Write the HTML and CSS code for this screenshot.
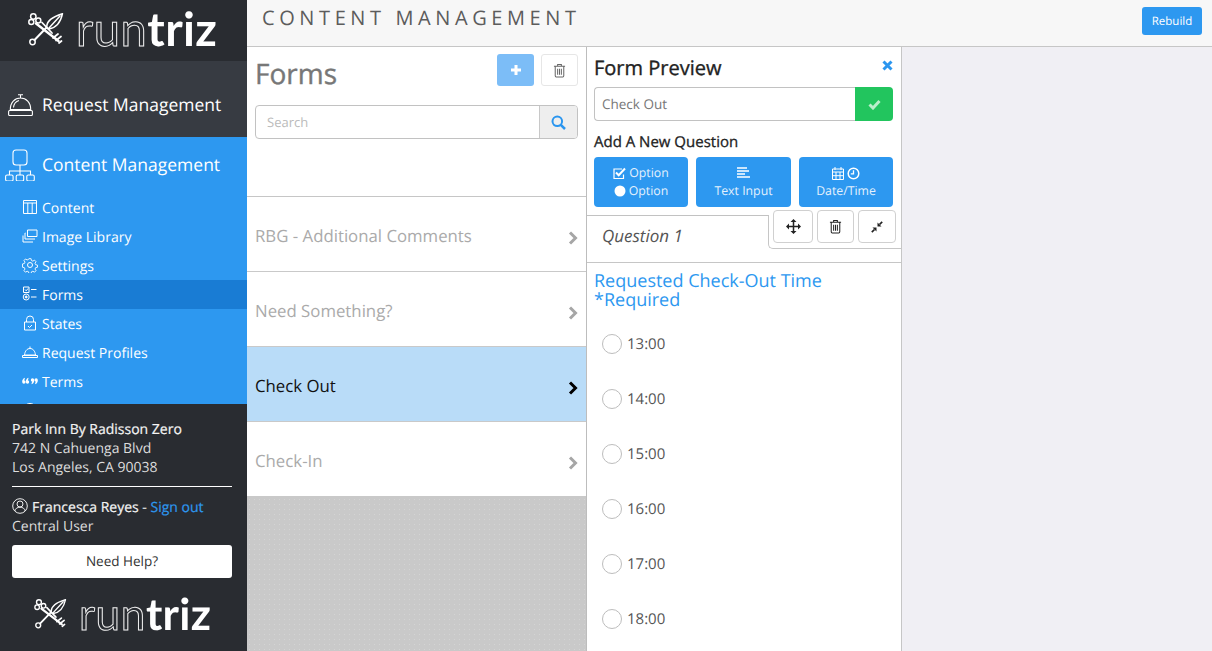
FILE: index.html
```html
<!DOCTYPE html>
<html lang="en">
<head>
<meta charset="utf-8">
<title>Content Management</title>
<link rel="stylesheet" href="styles.css">
</head>
<body>
<svg class="defs" width="0" height="0" aria-hidden="true">
  <symbol id="keys" viewBox="0 0 36 33">
    <g fill="none" stroke="#fff" stroke-width="1.500" stroke-linecap="round" stroke-linejoin="round">
      <circle cx="5.300" cy="3.500" r="2.700"/>
      <circle cx="3.300" cy="9" r="2.500"/>
      <circle cx="10.300" cy="7.500" r="2.500"/>
      <path d="M8 10.500 L30.500 28" stroke-width="2.400"/>
      <path d="M25 25 l5-4 M28 27.500 l5-4 M31 30 l2.500-2" stroke-width="1.800"/>
      <circle cx="4.500" cy="29" r="2.700"/>
      <path d="M6.500 27 L20 13" stroke-width="2"/>
      <path d="M19 15 C17.500 8 24 4 34.500 .7 C32.500 10 27.500 15 21 16 Z" fill="#292c31"/>
      <path d="M21 15 L32 3"/>
      <path d="M14 9.500 L24 20" stroke-width="1.800"/>
    </g>
  </symbol>
  <symbol id="trash" viewBox="0 0 14 16">
    <path fill="none" stroke="currentColor" stroke-width="1.100" d="M1 3.500h12M5 3.300V1.600h4v1.700M2.400 3.500v10.200c0 .7.400 1.200 1 1.200h7.200c.6 0 1-.5 1-1.200V3.500M5 6v6.500M7 6v6.500M9 6v6.500"/>
  </symbol>
  <symbol id="chev" viewBox="0 0 10 14">
    <path fill="none" stroke="currentColor" stroke-width="3" d="M2 1.500 L7.500 7 L2 12.500"/>
  </symbol>
</svg>

<div class="app">
  <aside class="sidebar">
    <div class="brand">
      <svg class="brand-keys"><use href="#keys"/></svg>
      <span class="wordmark"><span class="outline">run</span>triz</span>
    </div>
    <nav class="nav">
      <a class="section dark">
        <svg class="bell-icon" viewBox="0 0 25 22" fill="none" stroke="#fff" stroke-width="1.100">
          <path d="M12.500 .5v3.500M10 .8h5M2.300 15.500c0-7 4.500-11.500 10.200-11.500s10.200 4.500 10.200 11.500zM5.500 13.500c.3-3.500 2.300-6 5.500-7"/>
          <rect x=".6" y="16.500" width="23.800" height="5" rx="1"/>
        </svg>
        <span>Request Management</span>
      </a>
      <a class="section active">
        <svg class="section-icon" viewBox="0 0 30 32" fill="none" stroke="#fff" stroke-width="1.100">
          <rect x="8" y="1" width="14" height="15" rx="3"/>
          <path d="M15 16v6M4.500 26v-4h21v4M15 22v4"/>
          <rect x="0.600" y="26" width="7.500" height="6" rx="1.500"/>
          <rect x="11.200" y="26" width="7.500" height="6" rx="1.500"/>
          <rect x="21.800" y="26" width="7.500" height="6" rx="1.500"/>
        </svg>
        <span>Content Management</span>
      </a>
      <ul class="subnav">
        <li class="subitem">
          <svg class="sub-icon" viewBox="0 0 16 16" fill="none" stroke="#fff"><path d="M1.500 1.500h13v13h-13zM1.500 4h13M5.800 4v10.500M10.200 4v10.500"/></svg>
          Content
        </li>
        <li class="subitem">
          <svg class="sub-icon" viewBox="0 0 16 16" fill="none" stroke="#fff"><path d="M5.500 2h9.500v6.500H5.500zM3.500 5H3v6h10M1 7.500V14h10"/></svg>
          Image Library
        </li>
        <li class="subitem">
          <svg class="sub-icon" viewBox="0 0 16 16" fill="none" stroke="#fff"><circle cx="8" cy="8" r="2.500"/><path d="M6.800 1h2.400l.4 2 1.600.7 1.800-1.100 1.700 1.700-1.100 1.800.7 1.600 2 .4v2.400l-2 .4-.7 1.600 1.100 1.800-1.700 1.700-1.800-1.100-1.600.7-.4 2H6.800l-.4-2-1.600-.7-1.800 1.100-1.700-1.700 1.100-1.800-.7-1.600-2-.4V6.800l2-.4.7-1.600L1.300 3l1.700-1.700 1.800 1.100 1.600-.7z" transform="translate(.8 .8) scale(.9)"/></svg>
          Settings
        </li>
        <li class="subitem current">
          <svg class="sub-icon" viewBox="0 0 16 16" fill="none" stroke="#fff"><path d="M1.500 1h5.500v5.500H1.500zM3 3.500l1.200 1.300L6 2.500M9 3.500h5.500M9 11h5.500"/><circle cx="4.200" cy="11" r="3"/><circle cx="4.200" cy="11" r="1" fill="#fff"/></svg>
          Forms
        </li>
        <li class="subitem">
          <svg class="sub-icon" viewBox="0 0 16 16" fill="none" stroke="#fff"><path d="M2.500 7h11v8h-11zM4.500 7V4.500a3.500 3.500 0 0 1 7 0V7M6 11l1.500 1.500L10 10"/></svg>
          States
        </li>
        <li class="subitem">
          <svg class="sub-icon" viewBox="0 0 16 16" fill="none" stroke="#fff"><path d="M8 2.500v1.500M2.500 11C3 7 5 4.500 8 4.500s5 2.500 5.500 6.500zM.500 11.500h15v2H.5z"/></svg>
          Request Profiles
        </li>
        <li class="subitem">
          <svg class="sub-icon" viewBox="0 0 16 16" fill="#fff"><circle cx="1.900" cy="9" r="1.700"/><circle cx="5.500" cy="9" r="1.700"/><circle cx="10.500" cy="7" r="1.700"/><circle cx="14.100" cy="7" r="1.700"/><path d="M.2 8.800C.3 6.500 1.300 5.200 2.800 4.700v1.100L2 8zM3.800 8.800C3.900 6.500 4.900 5.200 6.400 4.700v1.100L5.600 8zM12.200 7.200c-.1 2.300-1.100 3.600-2.600 4.100v-1.100l.8-2.200zM15.800 7.200c-.1 2.300-1.100 3.600-2.600 4.100v-1.100l.8-2.200z"/></svg>
          Terms
        </li>
        <li class="subitem">
          <svg class="sub-icon" viewBox="0 0 16 16" fill="none" stroke="#fff"><circle cx="8" cy="8" r="6.500"/><path d="M1.500 8h13M8 1.500c-4 4-4 9 0 13M8 1.500c4 4 4 9 0 13"/></svg>
        </li>
      </ul>
    </nav>
    <div class="account">
      <div class="hotel">Park Inn By Radisson Zero</div>
      <div class="address">742 N Cahuenga Blvd</div>
      <div class="address">Los Angeles, CA 90038</div>
      <hr class="rule">
      <div class="user">
        <svg class="user-icon" viewBox="0 0 16 16" fill="none" stroke="#eee"><circle cx="8" cy="8" r="7.300"/><circle cx="8" cy="6" r="3"/><path d="M2.800 13c.5-2.600 2.600-3.800 5.200-3.800s4.700 1.200 5.200 3.800"/></svg>
        <span class="user-name">Francesca Reyes - </span><a class="signout">Sign out</a>
      </div>
      <div class="address">Central User</div>
      <button class="help">Need Help?</button>
      <div class="brand-foot">
        <svg class="foot-keys"><use href="#keys"/></svg>
        <span class="wordmark"><span class="outline">run</span>triz</span>
      </div>
    </div>
  </aside>

  <div class="main">
    <header class="topbar">
      <h1 class="page-title">CONTENT MANAGEMENT</h1>
      <button class="rebuild">Rebuild</button>
    </header>
    <div class="columns">
      <section class="forms">
        <div class="forms-head">
          <div class="forms-title-row">
            <h2 class="forms-title">Forms</h2>
            <button class="icon-btn add">
              <svg width="12" height="12" viewBox="0 0 12 12"><path d="M6 1v10M1 6h10" stroke="#fff" stroke-width="3"/></svg>
            </button>
            <button class="icon-btn ghost"><svg width="13" height="15"><use href="#trash"/></svg></button>
          </div>
          <div class="search">
            <span class="search-input">Search</span>
            <span class="search-btn">
              <svg width="15" height="15" viewBox="0 0 15 15" fill="none" stroke="#2b96ef" stroke-width="2"><circle cx="6.300" cy="6.300" r="4.800"/><path d="M9.800 9.800 L14 14" stroke-width="2.500"/></svg>
            </span>
          </div>
        </div>
        <ul class="form-list">
          <li class="form-row">RBG - Additional Comments<svg class="chev" width="10" height="14"><use href="#chev"/></svg></li>
          <li class="form-row">Need Something?<svg class="chev" width="10" height="14"><use href="#chev"/></svg></li>
          <li class="form-row selected">Check Out<svg class="chev" width="10" height="14"><use href="#chev"/></svg></li>
          <li class="form-row">Check-In<svg class="chev" width="10" height="14"><use href="#chev"/></svg></li>
        </ul>
      </section>

      <section class="preview">
        <div class="preview-head">
          <h2 class="preview-title">Form Preview</h2>
          <svg class="close" width="11" height="11" viewBox="0 0 11 11"><path d="M1.500 1.500l8 8M9.500 1.500l-8 8" stroke="#2b96ef" stroke-width="3"/></svg>
        </div>
        <div class="name-field">
          <span class="name-input">Check Out</span>
          <span class="name-ok">
            <svg width="13" height="11" viewBox="0 0 13 11" fill="none" stroke="#b9eecb" stroke-width="3"><path d="M1.500 5.500l3.500 3.500 6.500-7"/></svg>
          </span>
        </div>
        <h3 class="add-title">Add A New Question</h3>
        <div class="add-buttons">
          <button class="add-btn">
            <span class="add-line">
              <svg width="13" height="13" viewBox="0 0 13 13" fill="none" stroke="#fff" stroke-width="1.200"><path d="M10.500 7.500v4h-9.500v-9.500h8"/><path d="M3 5.500l2.700 2.700 6.300-6.700" stroke-width="2"/></svg>
              Option
            </span>
            <span class="add-line">
              <svg width="12" height="12" viewBox="0 0 12 12"><circle cx="6" cy="6" r="5.500" fill="#fff"/></svg>
              Option
            </span>
          </button>
          <button class="add-btn">
            <span class="add-line">
              <svg width="13" height="12" viewBox="0 0 13 12" stroke="#fff" stroke-width="1.500"><path d="M0 1h10M0 4h12M0 7h8M0 10h13"/></svg>
            </span>
            <span class="add-line">Text Input</span>
          </button>
          <button class="add-btn">
            <span class="add-line">
              <svg width="12" height="13" viewBox="0 0 12 13" fill="none" stroke="#fff"><path d="M.500 2h11v10.500H.500zM.500 5h11M4 5v7.500M8 5v7.500M.500 8.700h11M3 0v3M9 0v3"/></svg>
              <svg width="13" height="13" viewBox="0 0 13 13" fill="none" stroke="#fff"><circle cx="6.500" cy="6.500" r="5.300" stroke-width="1.500"/><path d="M6.500 3.200v3.600H3.800" stroke-width="1.300"/></svg>
            </span>
            <span class="add-line">Date/Time</span>
          </button>
        </div>
        <div class="question-bar">
          <div class="question-tab">Question 1</div>
          <div class="question-tools">
            <div class="tool-buttons">
              <button class="tool w40">
                <svg width="15" height="15" viewBox="0 0 15 15" fill="#222"><path d="M7.500 2v11M2 7.500h11" fill="none" stroke="#222" stroke-width="1.500"/><path d="M7.500 0l3 3h-6zM7.500 15l3-3h-6zM0 7.500l3-3v6zM15 7.500l-3-3v6z"/></svg>
              </button>
              <button class="tool w37"><svg width="13" height="15"><use href="#trash"/></svg></button>
              <button class="tool w38">
                <svg width="12" height="12" viewBox="0 0 12 12" fill="#222"><path d="M5.500 6.500h-4l4 4zM6.500 5.500h4l-4-4z"/><path d="M.8 11.200L3.500 8.500M8.500 3.500l2.700-2.700" stroke="#222" stroke-width="1.700"/></svg>
              </button>
            </div>
            <div class="tools-line"></div>
          </div>
        </div>
        <div class="question-body">
          <div class="question-text">Requested Check-Out Time<br>*Required</div>
          <ul class="answers">
            <li class="answer"><span class="radio"></span>13:00</li>
            <li class="answer"><span class="radio"></span>14:00</li>
            <li class="answer"><span class="radio"></span>15:00</li>
            <li class="answer"><span class="radio"></span>16:00</li>
            <li class="answer"><span class="radio"></span>17:00</li>
            <li class="answer"><span class="radio"></span>18:00</li>
          </ul>
        </div>
      </section>
      <div class="blank"></div>
    </div>
  </div>
</div>
</body>
</html>
```
FILE: styles.css
```css
* { box-sizing: border-box; }
html, body { margin: 0; height: 100%; overflow: hidden; }
body { font-family: "Open Sans", "Liberation Sans", sans-serif; color: #333; background: #f0eff4; text-rendering: geometricPrecision; }
h1, h2, h3, ul { margin: 0; padding: 0; font-weight: normal; list-style: none; }
button { font-family: inherit; cursor: pointer; text-rendering: geometricPrecision; }
.defs { position: absolute; }

.app { display: flex; height: 651px; width: 1212px; }

/* sidebar */
.sidebar { width: 247px; flex: none; display: flex; flex-direction: column; background: #292c31; color: #fff; }
.brand { height: 61px; flex: none; display: flex; align-items: center; padding: 0 0 3px 28px; gap: 12px; }
.brand-keys { width: 36px; height: 33px; flex: none; }
.wordmark { font-family: "Lato", sans-serif; font-size: 47px; line-height: 1; font-weight: 700; color: #fff; letter-spacing: .3px; white-space: nowrap; filter: grayscale(1); }
.outline { color: transparent; -webkit-text-stroke: 1px #eee; font-weight: 400; letter-spacing: .6px; }
.nav { flex: 1; min-height: 0; overflow: hidden; background: #2d98f0; }
.section { display: flex; align-items: center; color: #fff; font-size: 17.500px; }
.section.dark { height: 76px; background: #373b42; padding: 12px 0 0 8px; gap: 9px; }
.section.active { height: 56px; padding: 0 0 0 5px; gap: 7px; }
.bell-icon { width: 25px; height: 22px; flex: none; }
.section-icon { width: 30px; height: 32px; flex: none; }
.subnav { display: block; }
.subitem { height: 29px; display: flex; align-items: center; padding: 2px 0 0 22px; gap: 4px; font-size: 14px; color: #fff; }
.subitem.current { background: #197cd4; }
.sub-icon { width: 16px; height: 16px; flex: none; margin-top: -4px; }

.account { height: 247px; flex: none; padding: 16px 15px 0 12px; font-size: 14px; line-height: 19px; background: #292c31; }
.hotel { font-weight: 500; color: #f4f4f4; -webkit-text-stroke: .2px #f4f4f4; }
.address { color: #ddd; }
.rule { border: 0; border-top: 1px solid #fff; margin: 9px 0 11px; }
.user { display: flex; align-items: center; height: 19px; font-weight: 500; color: #f4f4f4; -webkit-text-stroke: .2px; white-space: pre; }
.user-icon { width: 16px; height: 16px; margin-right: 4px; margin-top: -3px; }
.signout { color: #2d98f0; }
.help { display: block; width: 220px; height: 33px; margin: 9px 0 0; padding: 0 0 2px; border: 0; border-radius: 3px; background: #fff; color: #333; font-size: 13.500px; }
.brand-foot { display: flex; align-items: center; padding-left: 22px; margin-top: 14px; gap: 12px; }
.foot-keys { width: 33px; height: 30px; flex: none; }
.brand-foot .wordmark { font-size: 44px; }

/* main */
.main { flex: 1; min-width: 0; display: flex; flex-direction: column; }
.topbar { height: 47px; flex: none; display: flex; justify-content: space-between; align-items: flex-start; padding: 0 10px 0 15px; background: #f7f7f7; border-bottom: 1px solid #c6c6c6; }
.page-title { font-size: 20px; line-height: 36px; letter-spacing: 4.600px; font-weight: 400; color: #5c5c5c; }
.rebuild { width: 60px; height: 28px; margin-top: 7px; padding: 0; border: 0; border-radius: 3px; background: #2d98f0; color: #fff; font-size: 11.500px; }
.columns { flex: 1; min-height: 0; display: flex; }

/* forms list */
.forms { width: 340px; flex: none; display: flex; flex-direction: column; background-color: #c9c9c9; background-image: radial-gradient(#d4d4d4 .6px, transparent .8px); background-size: 5px 5px; border-right: 1px solid #bdbdbd; }
.forms-head { height: 150px; flex: none; padding: 7px 8px 0 8px; background: #fff; border-bottom: 1px solid #c6c6c6; }
.forms-title-row { display: flex; align-items: flex-start; gap: 7px; }
.forms-title { flex: 1; font-size: 28px; line-height: 40px; font-weight: 500; color: #777; -webkit-text-stroke: .4px #777; }
.icon-btn { width: 37px; height: 32px; display: flex; align-items: center; justify-content: center; border-radius: 3px; padding: 0; }
.icon-btn.add { background: #7cbdf7; border: 0; }
.icon-btn.ghost { background: #fff; border: 1px solid #e6e6e6; color: #666; }
.search { display: flex; height: 34px; margin-top: 11px; border: 1px solid #c2c2c2; border-radius: 4px; overflow: hidden; }
.search-input { flex: 1; padding-left: 11px; font-size: 13px; line-height: 32px; color: #bbb; }
.search-btn { width: 38px; display: flex; align-items: center; justify-content: center; background: #eee; border-left: 1px solid #c8c8c8; }
.form-list { display: block; }
.form-row { height: 75px; display: flex; align-items: center; justify-content: space-between; padding: 2px 8px 0 8px; font-size: 16.800px; color: #aaa; background: #fff; border-bottom: 1px solid #c9c9c9; }
.form-row:last-child { border-bottom: 0; height: 74px; }
.form-row.selected { background: #b9dcf8; color: #111; }
.chev { color: #a6a6a6; margin-top: 5px; flex: none; }
.selected .chev { color: #000; }

/* preview */
.preview { width: 315px; flex: none; overflow: hidden; background: #fff; border-right: 1px solid #c6c6c6; }
.preview-head { display: flex; justify-content: space-between; align-items: flex-start; padding: 6px 8px 0 7px; height: 40px; }
.preview-title { font-size: 20px; line-height: 30px; font-weight: 500; color: #222; -webkit-text-stroke: .35px #222; }
.close { margin-top: 7px; }
.name-field { display: flex; height: 34px; margin: 0 8px 0 7px; }
.name-input { flex: 1; padding-left: 7px; font-size: 13.500px; line-height: 32px; color: #777; border: 1px solid #c2c2c2; border-right: 0; border-radius: 4px 0 0 4px; }
.name-ok { width: 38px; display: flex; align-items: center; justify-content: center; background: #22c55e; border-radius: 0 4px 4px 0; }
.add-title { font-size: 15px; line-height: 20px; font-weight: 500; color: #222; -webkit-text-stroke: .3px #222; padding: 11px 0 0 7px; height: 36px; }
.add-buttons { display: flex; justify-content: space-between; padding: 0 8px 0 7px; }
.add-btn { width: 94px; height: 50px; display: flex; flex-direction: column; align-items: center; justify-content: center; border: 0; padding: 0; border-radius: 4px; background: #2d98f0; color: #e4f1fd; font-size: 12.300px; line-height: 18px; }
.add-btn + .add-btn { width: 95px; }
.add-btn:last-child { width: 94px; }
.add-line { display: flex; align-items: center; justify-content: center; gap: 3px; height: 18px; }
.question-bar { display: flex; align-items: flex-start; height: 53px; margin-top: 3px; border-bottom: 1px solid #c6c6c6; }
.question-tab { width: 182px; height: 28px; margin-top: 5px; padding: 9px 0 0 15px; border-top: 1px solid #c2c2c2; border-right: 1px solid #c6c6c6; font-size: 17px; line-height: 22px; font-style: italic; color: #555; white-space: nowrap; }
.question-tools { flex: 1; }
.tool-buttons { display: flex; gap: 4px; padding-left: 4px; }
.tool { height: 33px; display: flex; align-items: center; justify-content: center; padding: 0; background: #fff; border: 1px solid #d0d0d0; border-radius: 4px; color: #222; }
.w40 { width: 40px; }
.w37 { width: 37px; }
.w38 { width: 38px; }
.tools-line { height: 6px; margin-left: -1px; border-left: 1px solid #c6c6c6; border-bottom: 1px solid #c6c6c6; border-bottom-left-radius: 5px; }
.question-body { padding: 9px 0 0 7px; }
.question-text { font-size: 18px; line-height: 19px; color: #2d98f0; }
.answers { display: block; margin-top: 6px; }
.answer { height: 55px; display: flex; align-items: center; padding-left: 8px; gap: 5px; font-size: 15px; color: #555; }
.radio { width: 20px; height: 20px; border: 1px solid #bdbdbd; border-radius: 50%; flex: none; background: #fff; }
.blank { flex: 1; background: #f0eff4; }
```
